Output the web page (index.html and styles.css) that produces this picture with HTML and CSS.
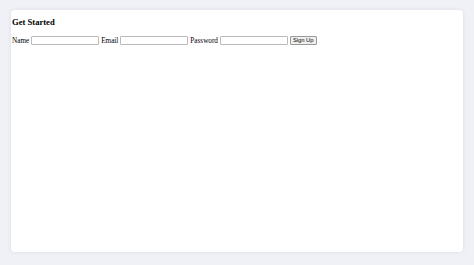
FILE: index.html
```html
<!DOCTYPE html>
<html lang="en">
<head>
  <meta charset="UTF-8">
  <title>Get Started</title>
  <link rel="stylesheet" href="styles.css">
</head>
<body>

  <div class="card">
    <h3 class="title">Get Started</h3>
    <form class="signup">
      <label>Name</label>
      <input type="text" class="field">
      <label>Email</label>
      <input type="email" class="field">
      <label>Password</label>
      <input type="password" class="field">
      <button type="button" class="btn">Sign Up</button>
    </form>
  </div>

</body>
</html>
```

FILE: styles.css
```css
body {
  margin: 0;
  padding: 10px 11px 13px;
  background: #f0f1f6;
  font-family: "Liberation Serif", "Times New Roman", serif;
  font-size: 7.2px;
  color: #000;
}

.card {
  background: white;
  height: 242px;
  border-radius: 4px;
  box-shadow: 0 0 4px rgba(0,0,0,0.08);
  padding: 1px 1px;
  box-sizing: border-box;
}

.title {
  font-size: 8.6px;
  margin: 6px 0 9px;
}

.signup {
  display: flex;
  align-items: center;
  gap: 2px;
}

.field {
  width: 68px;
  height: 9px;
  box-sizing: border-box;
  border: 1px solid #bbb;
  border-radius: 1px;
  padding: 0 1px;
  margin: 0;
  font-size: 6px;
}

.btn {
  height: 9px;
  padding: 0 2px;
  font-family: "Liberation Sans", Arial, sans-serif;
  font-size: 5.8px;
  border: 1px solid #999;
  border-radius: 1px;
  background: #efefef;
  margin: 0;
  line-height: 1;
}
```
